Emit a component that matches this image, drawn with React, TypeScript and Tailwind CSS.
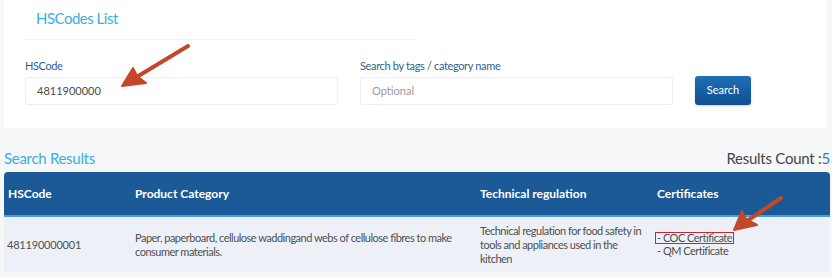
import React from "react";

const font = { fontFamily: 'Lato, "DejaVu Sans", sans-serif' };

export default function App() {
  return (
    <div className="relative w-[832px] h-[278px] bg-[#f6f7f9] overflow-hidden" style={font}>
      {/* Top card */}
      <div className="ml-[4px] w-[823px] h-[128px] bg-white flex flex-col">
        <div className="pl-[32px] pt-[8px] h-[39px] text-[15px] leading-[20px] tracking-[-0.5px] text-[#3aaee2]">HSCodes List</div>
        <div className="ml-[21px] w-[390px] h-px bg-[#eef0f3]" />
        <div className="flex items-end mt-[19px] pl-[21px]">
          <div className="flex flex-col w-[313px]">
            <label className="text-[11px] leading-[14px] tracking-[-0.4px] text-[#2f5f90] mb-[4px]">HSCode</label>
            <div className="h-[28px] border border-[#eceef1] rounded-[2px] flex items-center pl-[11px] text-[11px] text-[#4a4a4a]">4811900000</div>
          </div>
          <div className="flex flex-col w-[313px] ml-[22px]">
            <label className="text-[11px] leading-[14px] tracking-[-0.35px] text-[#2f5f90] mb-[4px]">Search by tags / category name</label>
            <div className="h-[28px] border border-[#eceef1] rounded-[2px] flex items-center pl-[11px] text-[11px] text-[#9a9a9a]">Optional</div>
          </div>
          <button className="ml-[22px] w-[56px] h-[29px] rounded-[3px] text-white text-[11px] bg-gradient-to-b from-[#1f6fb8] to-[#104f8e] shadow-[0_1px_2px_rgba(0,0,0,0.2)]">Search</button>
        </div>
      </div>

      {/* Results */}
      <div className="pl-[4px] pr-[2px]">
        <div className="flex items-end justify-between h-[44px] pb-[5px]">
          <div className="text-[15px] leading-[18px] tracking-[-0.3px] text-[#3aaee2]">Search Results</div>
          <div className="text-[15px] leading-[18px] tracking-[-0.25px] text-[#444]">Results Count :<span className="text-[#2b7fc8]">5</span></div>
        </div>
        <div className="w-[826px]">
          <div className="grid grid-cols-[127px_345px_177px_1fr] h-[45px] bg-[#1b5a97] rounded-t-[4px] border-b-2 border-[#4a9ee0] items-center text-white font-bold text-[12px]">
            <div className="pl-[4px]">HSCode</div>
            <div className="pl-[4px]">Product Category</div>
            <div className="pl-[4px]">Technical regulation</div>
            <div className="pl-[4px]">Certificates</div>
          </div>
          <div className="grid grid-cols-[127px_345px_177px_1fr] h-[55px] bg-[#edf1f7] items-center text-[11px] leading-[14px] tracking-[-0.5px] text-[#4f4f4f]">
            <div className="pl-[3px] tracking-[-0.2px]">481190000001</div>
            <div className="pl-[4px] pr-[10px]">Paper, paperboard, cellulose waddingand webs of cellulose fibres to make consumer materials.</div>
            <div className="pl-[4px] pr-[2px]">Technical regulation for food safety in tools and appliances used in the kitchen</div>
            <div className="pl-[2px] flex flex-col items-start">
              <span className="border border-[#c9262c] px-[1px] leading-[10px] h-[12px]">- COC Certificate</span>
              <span className="pl-[2px]">- QM Certificate</span>
            </div>
          </div>
        </div>
      </div>

      {/* Annotation arrows */}
      <svg className="absolute inset-0 pointer-events-none" width="832" height="278" viewBox="0 0 832 278">
        <g stroke="#c4472b" strokeWidth="4" strokeLinecap="round" strokeLinejoin="round" fill="#c4472b">
          <line x1="188" y1="46" x2="130" y2="81" />
          <polygon points="122,86 133,68 137,76 146,83" strokeWidth="2" />
          <line x1="781" y1="198" x2="741" y2="225" />
          <polygon points="734,230 742,211 746,219 757,225" strokeWidth="2" />
        </g>
      </svg>
    </div>
  );
}
